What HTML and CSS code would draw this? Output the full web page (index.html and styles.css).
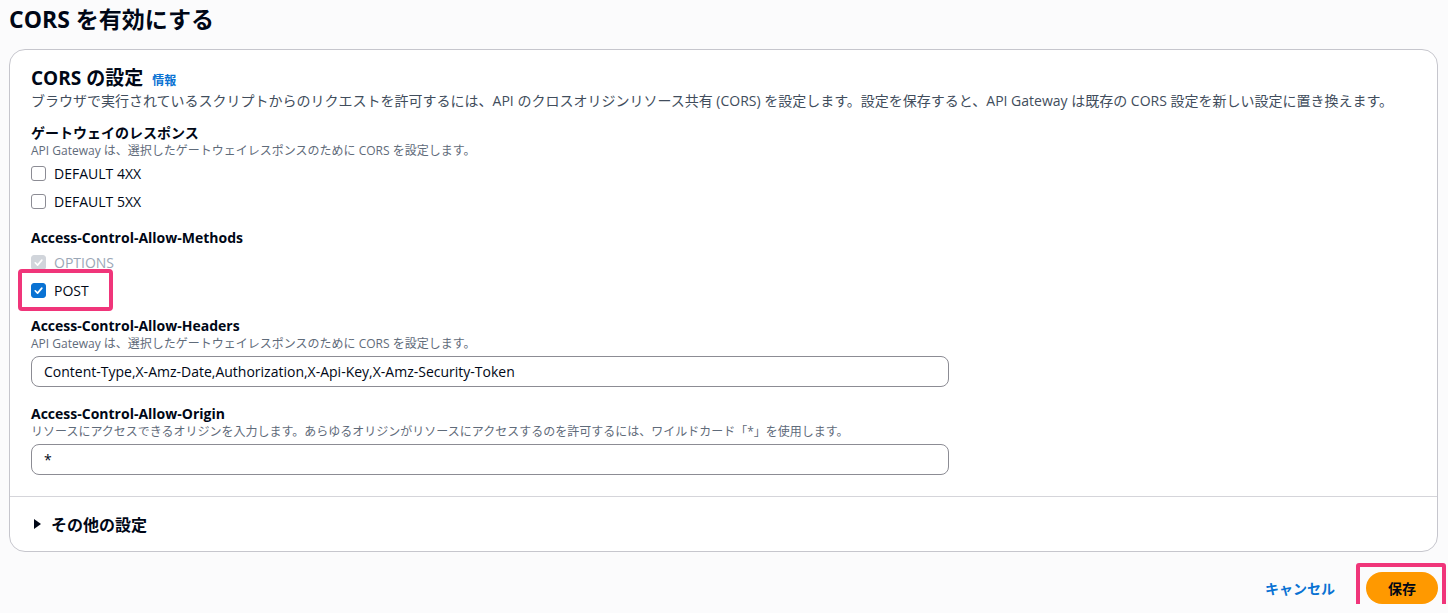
FILE: index.html
```html
<!DOCTYPE html>
<html>
<head>
    <title>CORS を有効にする</title>
    <link rel="stylesheet" href="styles.css">
</head>
<body>
<div class="page">
    <h1 class="page-title">CORS を有効にする</h1>

    <div class="card">
        <div class="card-body">
            <div class="card-head">
                <h2>CORS の設定</h2>
                <a class="info" href="#">情報</a>
            </div>
            <p class="desc">ブラウザで実行されているスクリプトからのリクエストを許可するには、API のクロスオリジンリソース共有 (CORS) を設定します。設定を保存すると、API Gateway は既存の CORS 設定を新しい設定に置き換えます。</p>

            <div class="field first">
                <div class="label">ゲートウェイのレスポンス</div>
                <div class="hint">API Gateway は、選択したゲートウェイレスポンスのために CORS を設定します。</div>
                <div class="checks">
                    <label class="check"><span class="box"></span>DEFAULT 4XX</label>
                    <label class="check"><span class="box"></span>DEFAULT 5XX</label>
                </div>
            </div>

            <div class="field methods">
                <div class="label">Access-Control-Allow-Methods</div>
                <div class="checks">
                    <label class="check disabled"><span class="box on"><svg viewBox="0 0 14 14"><path d="M3.5 7.3 L6 9.8 L10.6 4.4"/></svg></span>OPTIONS</label>
                    <label class="check marked"><span class="box on"><svg viewBox="0 0 14 14"><path d="M3.5 7.3 L6 9.8 L10.6 4.4"/></svg></span>POST</label>
                </div>
            </div>

            <div class="field">
                <div class="label">Access-Control-Allow-Headers</div>
                <div class="hint">API Gateway は、選択したゲートウェイレスポンスのために CORS を設定します。</div>
                <input class="text" type="text" value="Content-Type,X-Amz-Date,Authorization,X-Api-Key,X-Amz-Security-Token">
            </div>

            <div class="field origin">
                <div class="label">Access-Control-Allow-Origin</div>
                <div class="hint">リソースにアクセスできるオリジンを入力します。あらゆるオリジンがリソースにアクセスするのを許可するには、ワイルドカード「*」を使用します。</div>
                <input class="text" type="text" value="*">
            </div>
        </div>

        <div class="card-foot">
            <span class="caret"></span>
            <span class="more">その他の設定</span>
        </div>
    </div>

    <div class="actions">
        <a class="cancel" href="#">キャンセル</a>
        <button class="save">保存</button>
    </div>
</div>
</body>
</html>
```

FILE: styles.css
```css
html, body {
    margin: 0;
    background-color: #fbfbfc;
    font-family: "Open Sans", "Noto Sans CJK JP", sans-serif;
    color: #000716;
}

.page {
    padding: 4px 10px 0 9px;
}

.page-title {
    margin: 0;
    font-size: 23px;
    line-height: 30px;
    font-weight: 700;
}

.card {
    margin-top: 15px;
    background-color: #fff;
    border: 1px solid #c6c6cd;
    border-radius: 16px;
}

.card-body {
    padding: 17px 20px 21px 21px;
    border-bottom: 1px solid #d5d5da;
}

.card-head {
    display: flex;
    align-items: baseline;
    gap: 9px;
}

.card-head h2 {
    margin: 0;
    font-size: 19px;
    line-height: 22px;
    font-weight: 700;
}

.info {
    font-size: 12px;
    font-weight: 700;
    color: #0972d3;
    text-decoration: none;
}

.desc {
    margin: 2px 0 0 0;
    font-size: 14px;
    line-height: 20px;
    color: #414d5c;
}

.field {
    margin-top: 16px;
}

.field.first {
    margin-top: 12px;
}

.field.methods {
    margin-top: 17px;
}

.field.origin {
    margin-top: 17px;
}

.label {
    font-size: 14px;
    line-height: 20px;
    font-weight: 700;
}

.hint {
    font-size: 12px;
    line-height: 14px;
    margin-top: 1px;
    color: #5f6b7a;
}

.checks {
    display: flex;
    flex-direction: column;
    gap: 8px;
    margin-top: 5px;
}

.field.methods .checks {
    margin-top: 4px;
}

.check {
    position: relative;
    display: flex;
    align-items: center;
    gap: 8px;
    height: 20px;
    font-size: 14px;
}

.box {
    box-sizing: border-box;
    width: 15px;
    height: 15px;
    border: 1px solid #8c8c94;
    border-radius: 3px;
    background-color: #fff;
}

.box.on {
    border-color: #0972d3;
    background-color: #0972d3;
}

.box svg {
    display: block;
    width: 13px;
    height: 13px;
}

.box svg path {
    fill: none;
    stroke: #fff;
    stroke-width: 1.8;
    stroke-linecap: round;
    stroke-linejoin: round;
}

.check.disabled {
    color: #9ba7b6;
}

.check.disabled .box {
    border-color: #d1d5db;
    background-color: #d1d5db;
}

.check.marked::after {
    content: "";
    position: absolute;
    left: -13px;
    top: -11px;
    width: 87px;
    height: 34px;
    border: 4px solid #f0357a;
    border-radius: 4px;
}

.text {
    display: block;
    box-sizing: border-box;
    width: 918px;
    height: 31px;
    margin-top: 5px;
    padding: 0 12px;
    border: 1px solid #8c8c94;
    border-radius: 8px;
    font-family: inherit;
    font-size: 14px;
    color: #000716;
    background-color: #fff;
}

.card-foot {
    display: flex;
    align-items: center;
    gap: 10px;
    height: 54px;
    padding-left: 24px;
}

.caret {
    width: 0;
    height: 0;
    border-top: 5px solid transparent;
    border-bottom: 5px solid transparent;
    border-left: 7px solid #000716;
}

.more {
    font-size: 16px;
    font-weight: 700;
}

.actions {
    display: flex;
    justify-content: flex-end;
    align-items: center;
    gap: 31px;
    margin-top: 20px;
}

.cancel {
    font-size: 14px;
    font-weight: 700;
    color: #0972d3;
    text-decoration: none;
}

.save {
    position: relative;
    width: 72px;
    height: 32px;
    border: none;
    border-radius: 16px;
    background-color: #ff9900;
    color: #000716;
    font-family: inherit;
    font-size: 14px;
    font-weight: 700;
}

.save::after {
    content: "";
    position: absolute;
    left: -10px;
    top: -9px;
    width: 82px;
    height: 40px;
    border: 4px solid #f0357a;
    border-radius: 3px;
}
```
